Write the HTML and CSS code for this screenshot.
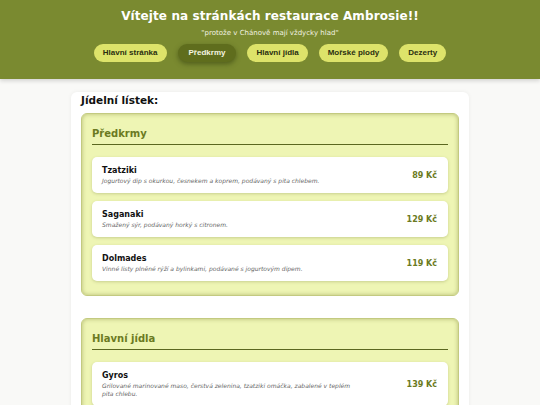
FILE: index.html
```html
<!DOCTYPE html>
<html lang="cs">
<head>
<meta charset="utf-8">
<title>Restaurace Ambrosie</title>
<link rel="stylesheet" href="styles.css">
</head>
<body>
<header class="site-header">
  <h1 class="title">Vítejte na stránkách restaurace Ambrosie!!</h1>
  <p class="tagline">"protože v Chánově mají vždycky hlad"</p>
  <nav class="nav">
    <a class="nav-btn" href="#">Hlavní stránka</a>
    <a class="nav-btn active" href="#">Předkrmy</a>
    <a class="nav-btn" href="#">Hlavní jídla</a>
    <a class="nav-btn" href="#">Mořské plody</a>
    <a class="nav-btn" href="#">Dezerty</a>
  </nav>
</header>
<main class="container">
  <h2 class="page-title">Jídelní lístek:</h2>
  <section class="section">
    <h3 class="section-title">Předkrmy</h3>
    <div class="items">
      <div class="item">
        <div class="item-text">
          <div class="item-name">Tzatziki</div>
          <div class="item-desc">Jogurtový dip s okurkou, česnekem a koprem, podávaný s pita chlebem.</div>
        </div>
        <div class="item-price">89 Kč</div>
      </div>
      <div class="item">
        <div class="item-text">
          <div class="item-name">Saganaki</div>
          <div class="item-desc">Smažený sýr, podávaný horký s citronem.</div>
        </div>
        <div class="item-price">129 Kč</div>
      </div>
      <div class="item">
        <div class="item-text">
          <div class="item-name">Dolmades</div>
          <div class="item-desc">Vinné listy plněné rýží a bylinkami, podávané s jogurtovým dipem.</div>
        </div>
        <div class="item-price">119 Kč</div>
      </div>
    </div>
  </section>
  <section class="section">
    <h3 class="section-title">Hlavní jídla</h3>
    <div class="items">
      <div class="item">
        <div class="item-text">
          <div class="item-name">Gyros</div>
          <div class="item-desc">Grilované marinované maso, čerstvá zelenina, tzatziki omáčka, zabalené v teplém pita chlebu.</div>
        </div>
        <div class="item-price">139 Kč</div>
      </div>
      <div class="item">
        <div class="item-text">
          <div class="item-name">Souvlaki</div>
          <div class="item-desc">Grilované špízy z vepřového masa, podávané s hranolky a salátem.</div>
        </div>
        <div class="item-price">159 Kč</div>
      </div>
    </div>
  </section>
</main>
</body>
</html>
```
FILE: styles.css
```css
* { box-sizing: border-box; }
html, body { margin: 0; padding: 0; }
body {
  background: #f9f9f7;
  font-family: "DejaVu Sans", Verdana, sans-serif;
  color: #111;
}
.site-header {
  background: #7a8a30;
  height: 79px;
  padding-top: 8px;
  text-align: center;
  box-shadow: 0 2px 4px rgba(0,0,0,0.15);
}
.title {
  margin: 0;
  font-size: 12px;
  letter-spacing: 0.1px;
  line-height: 16px;
  color: #fff;
  font-weight: bold;
}
.tagline {
  margin: 5px 0 0;
  font-size: 7px;
  line-height: 9px;
  color: #f2f2e0;
}
.nav {
  display: flex;
  justify-content: center;
  gap: 11px;
  margin-top: 6px;
}
.nav-btn {
  display: block;
  height: 18px;
  line-height: 18px;
  padding: 0 9px;
  border-radius: 9px;
  background: #dde36a;
  color: #2a2f10;
  font-family: "Liberation Sans", Arial, sans-serif;
  font-weight: bold;
  font-size: 8px;
  text-decoration: none;
}
.nav-btn.active {
  background: #5f6d1d;
  color: #f4f4e0;
  box-shadow: 0 2px 5px rgba(40,50,10,0.5);
  padding: 0 11px;
}
.container {
  width: 398px;
  margin: 13px auto 0;
  background: #fff;
  border-radius: 6px;
  box-shadow: 0 0 4px rgba(0,0,0,0.06);
  padding: 1px 10px 20px;
}
.page-title {
  margin: 0;
  font-size: 10.5px;
  line-height: 14px;
  padding: 0 0 6px 0;
  font-weight: bold;
}
.section {
  background: #eef5b4;
  border: 1px solid #c3ca80;
  border-radius: 6px;
  box-shadow: inset 0 0 4px rgba(110,120,40,0.45);
  padding: 12px 10px 14px;
  margin-bottom: 22px;
}
.section-title {
  margin: 0;
  color: #6b7a22;
  font-size: 10px;
  line-height: 15px;
  padding: 0 0 3px;
  border-bottom: 1.5px solid #5b6720;
  font-weight: bold;
}
.items {
  display: flex;
  flex-direction: column;
  gap: 8px;
  margin-top: 12px;
}
.item {
  background: #fff;
  border-radius: 5px;
  box-shadow: 0 1px 3px rgba(90,100,30,0.25);
  min-height: 36px;
  padding: 8px 11px 8px 10px;
  display: flex;
  align-items: center;
  justify-content: space-between;
}
.item-text { max-width: 260px; }
.item-name {
  font-weight: bold;
  font-size: 8px;
  line-height: 11px;
}
.item-desc {
  font-style: italic;
  font-size: 6px;
  line-height: 8px;
  color: #666;
  margin-top: 1px;
}
.item-price {
  font-weight: bold;
  font-size: 8px;
  color: #6b7a22;
}
```
